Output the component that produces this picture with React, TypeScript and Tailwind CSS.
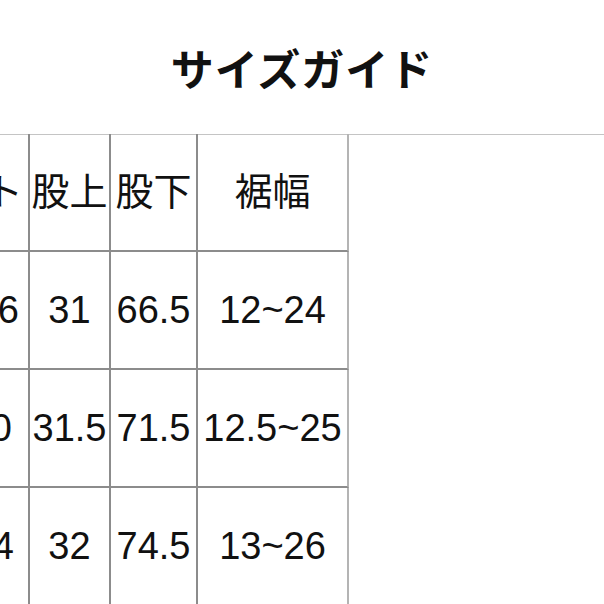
import React from "react";

const font = { fontFamily: '"Liberation Sans", "Noto Sans CJK JP", sans-serif' };

type Row = { waist: string; waistPad: string; rise: string; inseam: string; hem: string };

const rows: Row[] = [
  { waist: "66", waistPad: "pr-[9px]", rise: "31", inseam: "66.5", hem: "12~24" },
  { waist: "70", waistPad: "pr-[16px]", rise: "31.5", inseam: "71.5", hem: "12.5~25" },
  { waist: "74", waistPad: "pr-[14px]", rise: "32", inseam: "74.5", hem: "13~26" },
];

function Cell({ children, className = "" }: { children: React.ReactNode; className?: string }) {
  return (
    <div
      className={`flex h-[118px] items-center whitespace-nowrap border-b-2 border-r-2 border-[#8c8c8c] text-[38px] text-[#111] ${className}`}
    >
      {children}
    </div>
  );
}

export default function App() {
  return (
    <div className="h-[604px] w-[604px] overflow-hidden bg-white" style={font}>
      <div className="flex h-[135px] items-center justify-center border-b border-[#c4c4c4] pt-[8px]">
        <h1 className="text-[43px] font-bold tracking-[1px] text-[#111]">サイズガイド</h1>
      </div>
      <div className="-mt-px overflow-hidden">
        <div className="-ml-[152px] grid w-max grid-cols-[182px_81px_87px_151px]">
          <Cell className="justify-end pr-[5px] text-[37px]">ウエスト</Cell>
          <Cell className="justify-center text-[37px]">股上</Cell>
          <Cell className="justify-center text-[37px]">股下</Cell>
          <Cell className="justify-center border-r-[#b4b4b4] text-[37px]">裾幅</Cell>
          {rows.map((r) => (
            <React.Fragment key={r.hem}>
              <Cell className={`justify-end ${r.waistPad}`}>{r.waist}</Cell>
              <Cell className="justify-center">{r.rise}</Cell>
              <Cell className="justify-center">{r.inseam}</Cell>
              <Cell className="justify-center border-r-[#b4b4b4]">{r.hem}</Cell>
            </React.Fragment>
          ))}
        </div>
      </div>
    </div>
  );
}
